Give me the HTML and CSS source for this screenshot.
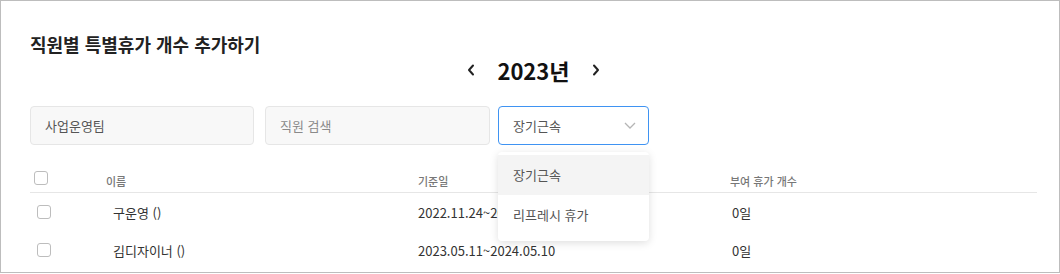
FILE: index.html
```html
<!DOCTYPE html>
<html lang="ko">
<head>
    <meta charset="UTF-8">
    <title>직원별 특별휴가 개수 추가하기</title>
    <link rel="stylesheet" href="styles.css">
</head>
<body>
    <div class="leave-panel">
        <h2 class="panel-title">직원별 특별휴가 개수 추가하기</h2>

        <div class="year-nav">
            <button class="year-btn" aria-label="이전 연도">
                <svg width="8" height="12" viewBox="0 0 8 12"><path d="M6 1.5 2 6l4 4.5" fill="none" stroke="#222" stroke-width="2" stroke-linecap="round" stroke-linejoin="round"/></svg>
            </button>
            <span class="year-label">2023년</span>
            <button class="year-btn" aria-label="다음 연도">
                <svg width="8" height="12" viewBox="0 0 8 12"><path d="M2 1.5 6 6l-4 4.5" fill="none" stroke="#222" stroke-width="2" stroke-linecap="round" stroke-linejoin="round"/></svg>
            </button>
        </div>

        <div class="filters">
            <div class="field field-team">사업운영팀</div>
            <div class="field field-search placeholder">직원 검색</div>
            <div class="select-wrap">
                <div class="select-box">
                    <span>장기근속</span>
                    <svg width="12" height="7" viewBox="0 0 12 7"><path d="M1 1l5 5 5-5" fill="none" stroke="#b5b5b5" stroke-width="1.3"/></svg>
                </div>
                <ul class="select-menu">
                    <li class="active">장기근속</li>
                    <li>리프레시 휴가</li>
                </ul>
            </div>
        </div>

        <div class="leave-table">
            <div class="table-head">
                <span class="check"></span>
                <span class="th">이름</span>
                <span class="th">기준일</span>
                <span class="th">부여 휴가 개수</span>
            </div>
            <div class="table-row">
                <span class="check"></span>
                <span class="td td-name">구운영 ()</span>
                <span class="td">2022.11.24~2023.11.23</span>
                <span class="td td-count">0일</span>
            </div>
            <div class="table-row">
                <span class="check"></span>
                <span class="td td-name">김디자이너 ()</span>
                <span class="td">2023.05.11~2024.05.10</span>
                <span class="td td-count">0일</span>
            </div>
        </div>
    </div>
</body>
</html>
```

FILE: styles.css
```css
* {
    margin: 0;
    padding: 0;
    box-sizing: border-box;
}

body {
    font-family: 'Noto Sans CJK KR', 'Noto Sans', sans-serif;
    background: #fff;
    color: #333;
}

.leave-panel {
    width: 1060px;
    height: 273px;
    border: 1px solid #bdbdbd;
    padding: 32px 22px 0 29px;
    overflow: hidden;
}

.panel-title {
    font-size: 18px;
    line-height: 22px;
    font-weight: 700;
    color: #222;
}

.year-nav {
    display: flex;
    justify-content: center;
    align-items: center;
    gap: 22px;
    height: 28px;
    margin-top: 1px;
}

.year-btn {
    border: none;
    background: none;
    display: flex;
    align-items: center;
    cursor: pointer;
}

.year-label {
    font-size: 22px;
    line-height: 28px;
    font-weight: 700;
    color: #111;
}

.filters {
    display: flex;
    margin-top: 22px;
    height: 39px;
}

.field {
    height: 39px;
    border: 1px solid #e6e6e6;
    border-radius: 4px;
    background: #f8f8f8;
    padding-left: 14px;
    font-size: 13px;
    line-height: 37px;
    color: #555;
}

.field-team {
    width: 224px;
    margin-right: 11px;
}

.field-search {
    width: 225px;
    margin-right: 8px;
}

.placeholder {
    color: #8a8a8a;
}

.select-wrap {
    position: relative;
    width: 151px;
}

.select-box {
    height: 39px;
    border: 1px solid #3f93f2;
    border-radius: 4px;
    display: flex;
    align-items: center;
    justify-content: space-between;
    padding: 0 12px 0 14px;
    font-size: 13px;
    color: #555;
}

.select-menu {
    position: absolute;
    top: 46px;
    left: 0;
    width: 151px;
    list-style: none;
    background: #fff;
    border-radius: 4px;
    box-shadow: 0 2px 8px rgba(0, 0, 0, 0.13);
    padding: 3px 0 6px;
    z-index: 2;
}

.select-menu li {
    height: 40px;
    line-height: 40px;
    padding-left: 15px;
    font-size: 13px;
    color: #555;
}

.select-menu li.active {
    background: #f4f4f4;
}

.leave-table {
    margin-top: 18px;
}

.table-head,
.table-row {
    display: grid;
    grid-template-columns: 76px 312px 312px 1fr;
    align-items: center;
}

.table-head {
    height: 30px;
    border-bottom: 1px solid #e6e6e6;
}

.table-row {
    height: 38px;
}

.check {
    width: 14px;
    height: 14px;
    border: 1px solid #bdbdbd;
    border-radius: 3px;
    background: #fff;
}

.table-head .check {
    margin-left: 4px;
}

.table-row .check {
    margin-left: 7px;
}

.th {
    align-self: end;
    padding-bottom: 3px;
    font-size: 11px;
    line-height: 16px;
    font-weight: 500;
    color: #777;
}

.td {
    font-size: 13px;
    color: #333;
}

.td-name {
    padding-left: 7px;
}

.td-count {
    padding-left: 2px;
}
```
